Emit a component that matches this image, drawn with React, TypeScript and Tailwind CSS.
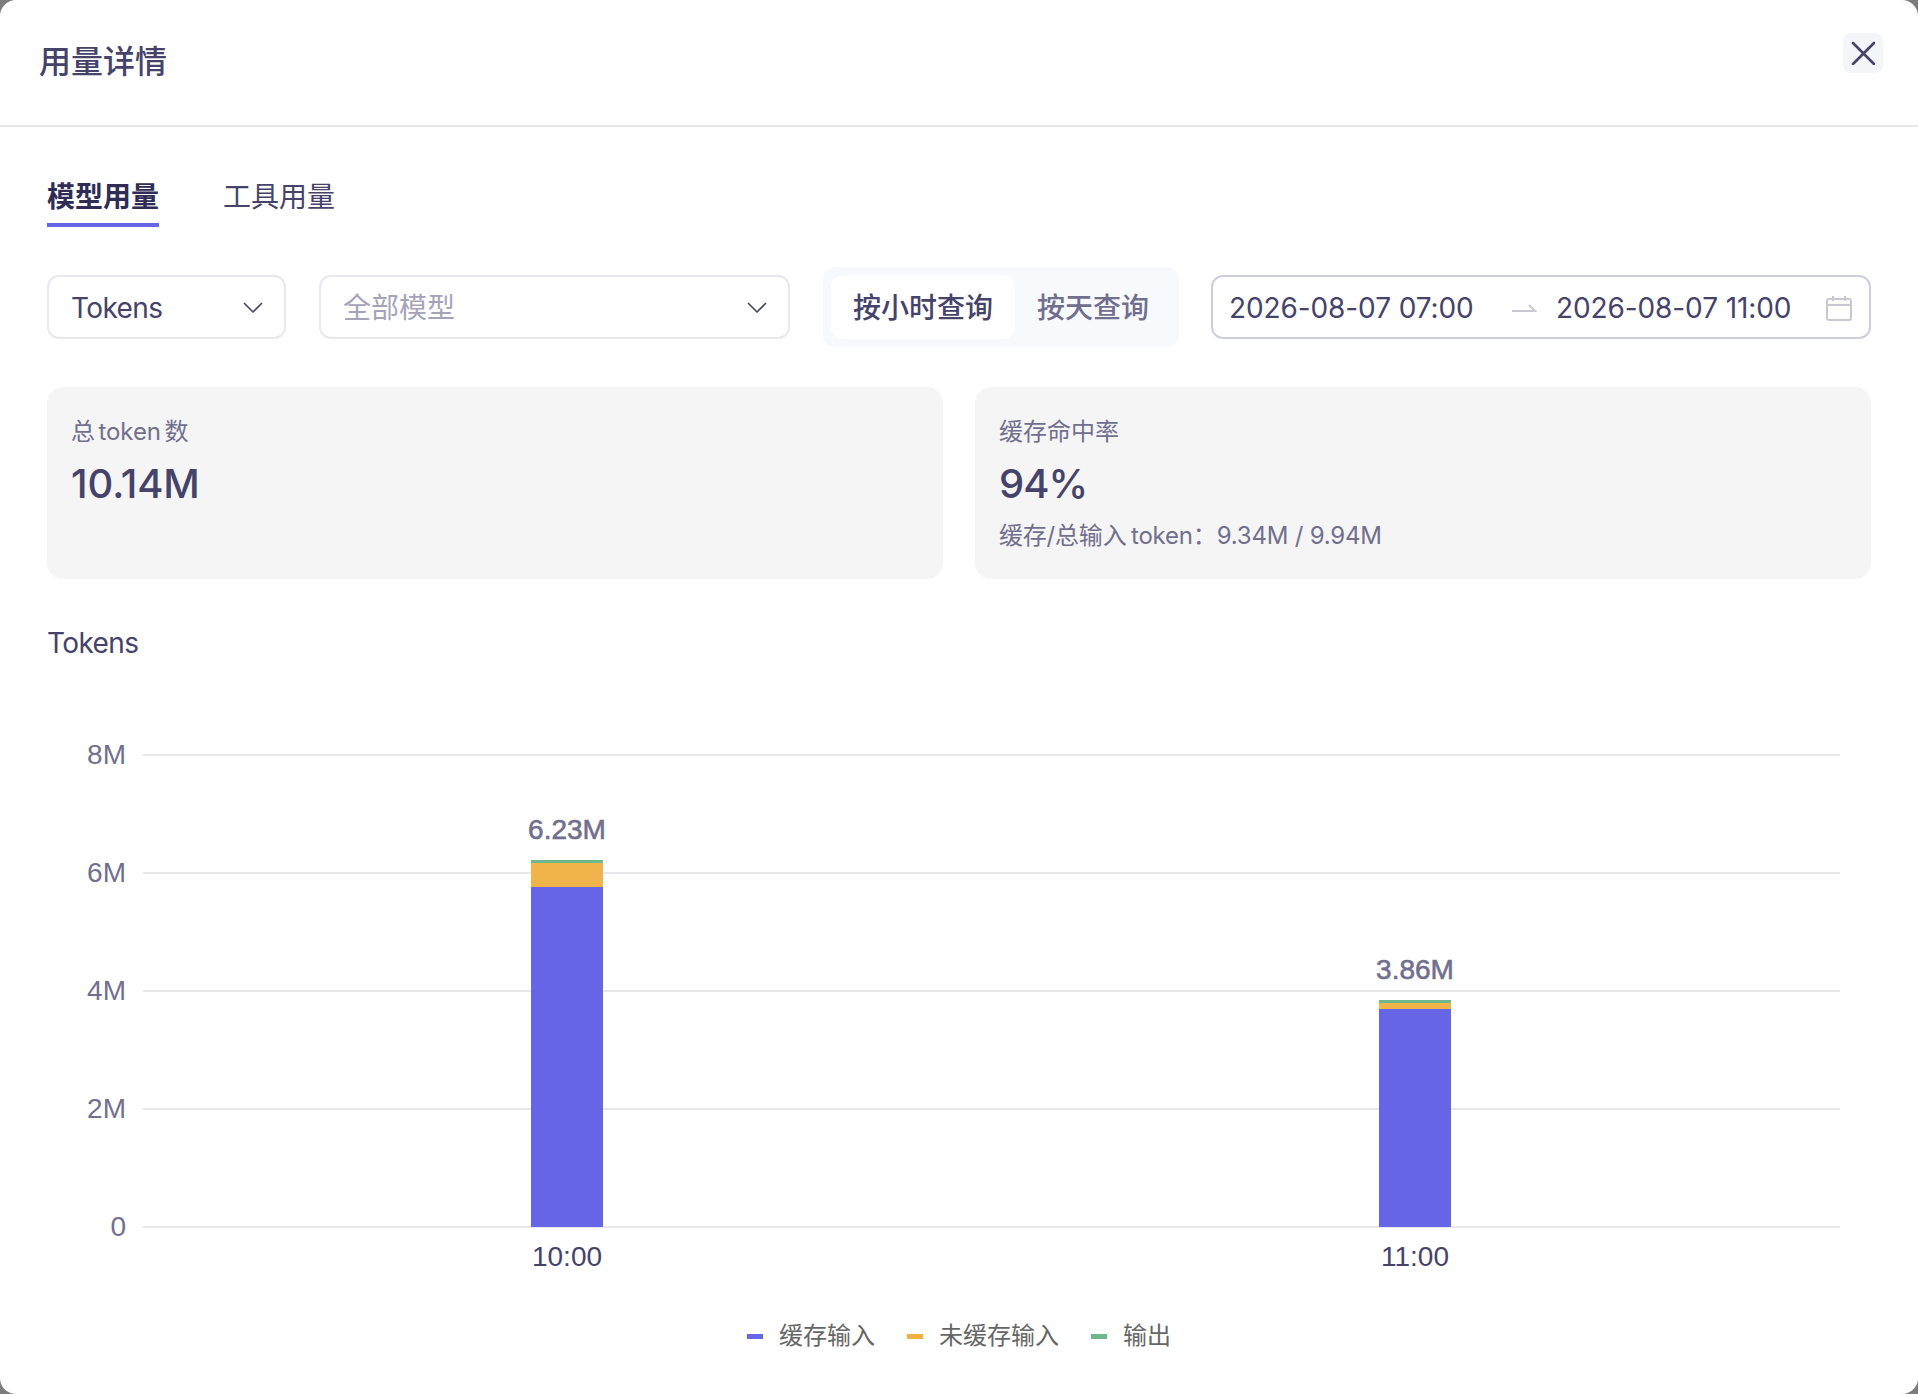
import React from 'react';

const font = { fontFamily: 'Inter, "Noto Sans CJK SC", sans-serif' };

const grid = [
  { label: '8M', y: 755 },
  { label: '6M', y: 873 },
  { label: '4M', y: 991 },
  { label: '2M', y: 1109 },
  { label: '0', y: 1227 },
];

// y values are absolute page rows, chart svg starts at 680
const bars = [
  { x: 531, time: '10:00', total: '6.23M', top: 860, mid: 863, low: 887 },
  { x: 1379, time: '11:00', total: '3.86M', top: 1000, mid: 1003, low: 1009 },
];

const legend = [
  { name: '缓存输入', color: 'bg-[#6665e6]' },
  { name: '未缓存输入', color: 'bg-[#f0b140]' },
  { name: '输出', color: 'bg-[#70b88c]' },
];

const Chevron = () => (
  <svg width="20" height="12" viewBox="0 0 20 12" fill="none" stroke="#4a4868" strokeWidth="1.7" strokeLinecap="round" strokeLinejoin="round">
    <path d="M1.5 1.5 10 10 18.5 1.5" />
  </svg>
);

function Select({ children, width }: { children: React.ReactNode; width: string }) {
  return (
    <div className={`${width} h-16 shrink-0 flex items-center justify-between pl-[22px] pr-[21px] pt-px border-2 border-[#e8e8ef] rounded-xl text-[28px]`}>
      {children}
      <Chevron />
    </div>
  );
}

function Chart() {
  const sy = (y: number) => y - 680;
  return (
    <svg width="1918" height="600" viewBox="0 0 1918 600" className="block -ml-[47px] mt-[17px]" style={{ fontFamily: '"Liberation Sans", sans-serif' }}>
      {grid.map(g => (
        <g key={g.label}>
          <rect x="143" y={sy(g.y) - 1} width="1697" height="2" fill="#e6e6ec" />
          <text x="126" y={sy(g.y) + 9} textAnchor="end" fontSize="28" fill="#716f8e">{g.label}</text>
        </g>
      ))}
      {bars.map(b => (
        <g key={b.time}>
          <rect x={b.x} y={sy(b.top)} width="72" height={b.mid - b.top} fill="#70b88c" />
          <rect x={b.x} y={sy(b.mid)} width="72" height={b.low - b.mid} fill="#f0b44a" />
          <rect x={b.x} y={sy(b.low)} width="72" height={1227 - b.low} fill="#6665e6" />
          <text x={b.x + 36} y={sy(b.top) - 21} textAnchor="middle" fontSize="28" fill="#716f8e" stroke="#716f8e" strokeWidth="0.6">{b.total}</text>
          <text x={b.x + 36} y={sy(1266)} textAnchor="middle" fontSize="28" fill="#45436a">{b.time}</text>
        </g>
      ))}
    </svg>
  );
}

export default function App() {
  return (
    <div className="h-[1394px] bg-[#7d7d7d] overflow-hidden text-[#45436a]" style={font}>
      <div className="h-full bg-white rounded-2xl">
        {/* Header */}
        <div className="h-[127px] border-b-2 border-[#e6e6ec] flex justify-between pl-[39px] pr-[35px]">
          <div className="text-[32px] leading-[44px] mt-10 font-medium">用量详情</div>
          <button className="w-10 h-10 mt-[33px] rounded-lg bg-[#f4f5f9] flex items-center justify-center">
            <svg width="24" height="24" viewBox="0 0 24 24" fill="none" stroke="#45436a" strokeWidth="2.6" strokeLinecap="round">
              <path d="M2 2 23 23M23 2 2 23" />
            </svg>
          </button>
        </div>

        <div className="pl-[47px] pr-[47px]">
          {/* Tabs */}
          <div className="flex gap-16 mt-[48px] text-[28px] leading-[44px]">
            <div className="w-28 h-[52px] border-b-4 border-[#6665e6] font-bold text-[#2f2d55] whitespace-nowrap">模型用量</div>
            <div className="w-28 whitespace-nowrap">工具用量</div>
          </div>

          {/* Filters */}
          <div className="flex items-center mt-[40px]">
            <Select width="w-[239px]"><span className="tracking-[-0.6px]">Tokens</span></Select>
            <div className="w-[33px] shrink-0" />
            <Select width="w-[471px]"><span className="text-[#a5a3b8]">全部模型</span></Select>
            <div className="ml-[33px] w-[356px] h-20 shrink-0 bg-[#f8f9fd] rounded-xl p-2 flex items-center text-[28px]">
              <div className="w-[184px] h-16 pt-px bg-white rounded-xl flex items-center justify-center font-medium">按小时查询</div>
              <div className="w-[156px] h-16 pt-px flex items-center justify-center text-[#716f8e] font-medium">按天查询</div>
            </div>
            <div className="ml-8 w-[660px] h-16 shrink-0 pt-px border-2 border-[#cdcfdf] rounded-xl flex items-center pl-4 text-[28px] tracking-[-0.1px] whitespace-nowrap">
              <span className="w-[282px]">2026-08-07 07:00</span>
              <svg width="26" height="12" viewBox="0 0 26 12" fill="none" stroke="#c9c9d4" strokeWidth="2">
                <path d="M1 9H24L18 3" />
              </svg>
              <span className="ml-[19px] w-[270px]">2026-08-07 11:00</span>
              <svg width="26" height="26" viewBox="0 0 26 26" fill="none" stroke="#c9c9d4" strokeWidth="2">
                <rect x="1" y="4" width="24" height="21" rx="2" />
                <path d="M1 10H25M7 1V6M19 1V6" />
              </svg>
            </div>
          </div>

          {/* Stat cards */}
          <div className="grid grid-cols-2 gap-8 mt-[40px]">
            <div className="h-[192px] bg-[#f5f5f5] rounded-2xl px-6 pt-[29px]">
              <div className="text-2xl leading-8 text-[#716f8e] [word-spacing:-3px] tracking-[-0.1px]">总 token 数</div>
              <div className="text-[40px] leading-[52px] font-medium mt-[10px] tracking-[-0.1px]">10.14M</div>
            </div>
            <div className="h-[192px] bg-[#f5f5f5] rounded-2xl px-6 pt-[29px]">
              <div className="text-2xl leading-8 text-[#716f8e]">缓存命中率</div>
              <div className="text-[40px] leading-[52px] font-medium mt-[10px] tracking-[-1px]">94%</div>
              <div className="text-2xl leading-8 text-[#716f8e] mt-[10px] whitespace-nowrap [word-spacing:-2px] tracking-[-0.2px]">缓存/总输入 token：<span className="[word-spacing:0px]">9.34M / 9.94M</span></div>
            </div>
          </div>

          {/* Chart */}
          <div className="text-[28px] leading-10 mt-[44px] tracking-[-0.6px]">Tokens</div>
          <Chart />

          {/* Legend */}
          <div className="flex items-center justify-center gap-[32px] text-2xl leading-8 text-[#666666] mt-[40px]">
            {legend.map(l => (
              <div key={l.name} className="flex items-center gap-4">
                <span className={`w-4 h-[5px] ${l.color}`} />
                <span>{l.name}</span>
              </div>
            ))}
          </div>
        </div>
      </div>
    </div>
  );
}
